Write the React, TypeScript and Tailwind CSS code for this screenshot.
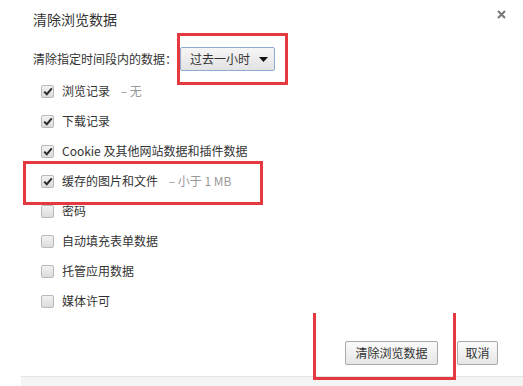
import React from 'react';

const rows = [
  { label: '浏览记录', note: '无', checked: true },
  { label: '下载记录', checked: true },
  { label: 'Cookie 及其他网站数据和插件数据', checked: true },
  { label: '缓存的图片和文件', note: '小于 1 MB', checked: true },
  { label: '密码', checked: false },
  { label: '自动填充表单数据', checked: false },
  { label: '托管应用数据', checked: false },
  { label: '媒体许可', checked: false },
];

const font = { fontFamily: '"Noto Sans CJK SC", "Liberation Sans", sans-serif' };

const Checkbox = ({ checked }: { checked: boolean }) => (
  <span className="flex h-[13px] w-[13px] items-center justify-center rounded-[2px] border border-[#b9b9b9] bg-gradient-to-b from-[#f2f2f2] to-[#dcdcdc]">
    {checked && (
      <svg width="10" height="9" viewBox="0 0 10 9">
        <path d="M1.2 4.6 L3.8 7.2 L8.8 1.4" fill="none" stroke="#2b2b2b" strokeWidth="2" />
      </svg>
    )}
  </span>
);

const App = () => {
  return (
    <div className="relative h-[386px] w-[523px] overflow-hidden bg-white text-[#333]" style={font}>
      {/* header */}
      <div className="flex items-start justify-between pl-[33px] pr-[17px] pt-[9px]">
        <h1 className="h-[20px] text-[14px] leading-[20px] text-[#333]">清除浏览数据</h1>
        <svg width="9" height="9" viewBox="0 0 9 9" className="mt-[1px]">
          <path d="M1 1 L8 8 M8 1 L1 8" stroke="#777" strokeWidth="2" />
        </svg>
      </div>

      {/* time range */}
      <div className="mt-[18px] flex h-[24px] items-center pl-[33px]">
        <span className="w-[147px] text-[12px] leading-[24px]">清除指定时间段内的数据：</span>
        <div className="flex h-[24px] w-[95px] items-center justify-between rounded-[2px] border border-[#8faad3] bg-gradient-to-b from-[#f6f6f6] to-[#e3e3e3] pl-[9px] pr-[6px]">
          <span className="text-[12px] leading-none">过去一小时</span>
          <svg width="9" height="5" viewBox="0 0 9 5">
            <path d="M0 0 L9 0 L4.5 5 Z" fill="#111" />
          </svg>
        </div>
      </div>

      {/* checkboxes */}
      <ul className="mt-[5px] pl-[41px]">
        {rows.map((r) => (
          <li key={r.label} className="flex h-[30px] items-center gap-[8px] text-[12px]">
            <Checkbox checked={r.checked} />
            <span className="text-[#333]">{r.label}</span>
            {r.note && <span className="text-[#999]">&nbsp;–&nbsp;{r.note}</span>}
          </li>
        ))}
      </ul>

      {/* buttons */}
      <div className="mt-[25px] flex justify-end gap-[19px] pr-[25px]">
        <button className="h-[24px] w-[93px] rounded-[2px] border border-[#a8a8a8] bg-gradient-to-b from-[#fbfbfb] to-[#e6e6e6] text-[12px] text-[#333]">
          清除浏览数据
        </button>
        <button className="h-[24px] w-[41px] rounded-[2px] border border-[#a8a8a8] bg-gradient-to-b from-[#fbfbfb] to-[#e6e6e6] text-[12px] text-[#333]">
          取消
        </button>
      </div>

      {/* footer strip */}
      <div className="ml-[21px] mt-[11px] h-[10px] border-t border-[#e3e3e3] bg-[#f4f4f4]" />

      {/* red annotation boxes */}
      <div className="absolute left-[177px] top-[33px] h-[52px] w-[111px] border-[3px] border-[#e5393f]" />
      <div className="absolute left-[23px] top-[161px] h-[44px] w-[240px] border-[3px] border-[#e5393f]" />
      <div className="absolute left-[313px] top-[313px] h-[67px] w-[143px] border-[3px] border-t-0 border-[#e5393f]" />
    </div>
  );
};

export default App;
